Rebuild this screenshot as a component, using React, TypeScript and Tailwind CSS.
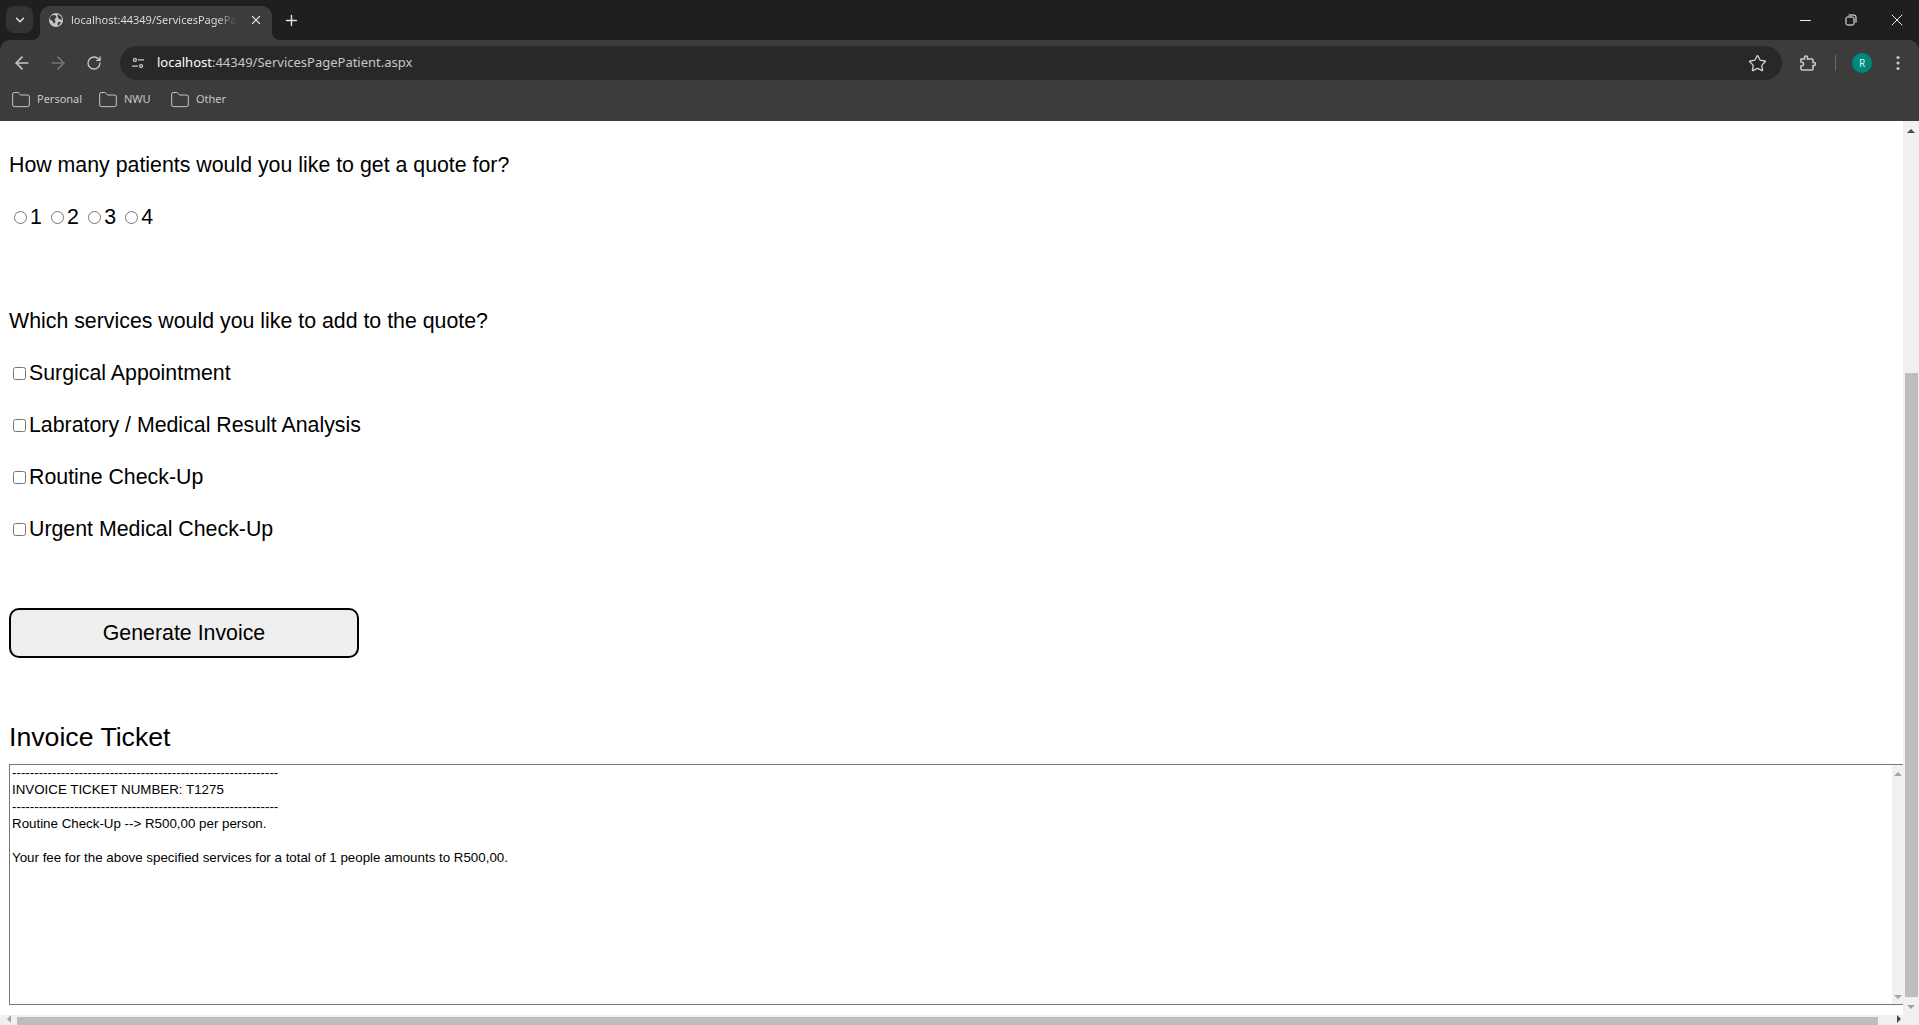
import React from 'react';
import { ArrowLeft, ArrowRight, ChevronDown, Folder, Minus, Plus, RotateCw, Star, X } from 'lucide-react';

const services = ['Surgical Appointment', 'Labratory / Medical Result Analysis', 'Routine Check-Up', 'Urgent Medical Check-Up'];
const bookmarks = [
  { name: 'Personal', width: 'w-[87px]' },
  { name: 'NWU', width: 'w-[72px]' },
  { name: 'Other', width: 'w-[70px]' },
];

function Arrow({ dir, color }: { dir: 'up' | 'down' | 'left' | 'right'; color: string }) {
  const points = {
    up: '0,8 4,4 8,8',
    down: '0,4 8,4 4,8',
    left: '6,0 6,8 2,4',
    right: '2,0 2,8 6,4',
  };
  return (
    <svg width="8" height="10" viewBox="0 0 8 10" fill={color}>
      <polygon points={points[dir]} />
    </svg>
  );
}

function TabStrip() {
  return (
    <div className="flex h-10 items-start bg-[#1f1f1f] pl-[6px]">
      <div className="mt-[6px] flex h-[27px] w-[27px] items-center justify-center rounded-lg bg-[#333333] text-[#e3e3e3]">
        <ChevronDown size={14} strokeWidth={2.5} />
      </div>
      <div className="relative z-10 ml-[7px] mt-[6px] flex h-[34px] w-[232px] items-center rounded-t-[10px] bg-[#3c3c3c] pb-[6px] pl-[8px]">
        <div className="absolute bottom-0 right-full h-2 w-2 bg-[radial-gradient(circle_at_0%_0%,transparent_8px,#3c3c3c_8px)]" />
        <div className="absolute bottom-0 left-full h-2 w-2 bg-[radial-gradient(circle_at_100%_0%,transparent_8px,#3c3c3c_8px)]" />
        <svg width="16" height="16" viewBox="0 0 16 16" className="shrink-0">
          <circle cx="8" cy="8" r="7" fill="#c4c7c5" />
          <path d="M3 3.5 L7 3 L8.5 5 L6.5 7.5 L7.5 9.5 L6 12 L4.5 9 L1.5 7 Z M10 2 L13.5 5 L13.8 8 L11 7 L9.5 4.5 Z M10 10 L13 10 L11 13.5 L9.5 13 Z" fill="#3c3c3c" />
        </svg>
        <span className="ml-[7px] w-[166px] whitespace-nowrap bg-gradient-to-r from-[#e3e3e3] from-88% to-transparent bg-clip-text font-['Noto_Sans',sans-serif] text-[11px] text-transparent">
          localhost:44349/ServicesPagePa
        </span>
        <X size={14} strokeWidth={2} className="ml-[12px] shrink-0 text-[#e3e3e3]" />
      </div>
      <Plus size={17} strokeWidth={2} className="ml-[11px] mt-[12px] text-[#e3e3e3]" />
      <div className="flex-1" />
      <div className="flex h-8 items-center text-white">
        <div className="flex w-[46px] justify-center pl-[2px] pt-[8px]"><Minus size={17} strokeWidth={1.3} /></div>
        <div className="flex w-[46px] justify-center pl-[2px] pt-[8px]">
          <svg width="12" height="12" viewBox="0 0 12 12" fill="none" stroke="currentColor" strokeWidth="1">
            <rect x="1" y="3" width="8" height="8" rx="1.5" />
            <path d="M3.5 1h5.5a2 2 0 0 1 2 2v5.5" />
          </svg>
        </div>
        <div className="flex w-[46px] justify-center pl-[2px] pt-[8px]"><X size={20} strokeWidth={1.1} /></div>
      </div>
    </div>
  );
}

function Toolbar() {
  return (
    <div className="bg-[#1f1f1f]">
      <div className="flex h-10 items-center rounded-t-[10px] bg-[#3c3c3c] pl-3 pr-[19px] pt-[6px] text-[#c7c7c7]">
        <ArrowLeft size={20} strokeWidth={2} className="text-[#c7c7c7]" />
        <ArrowRight size={20} strokeWidth={2} className="ml-4 text-[#757575]" />
        <RotateCw size={16} strokeWidth={2} className="ml-[18px]" />
        <div className="ml-[18px] flex h-[34px] flex-1 items-center rounded-full bg-[#282828] pl-[11px] pr-[15px]">
          <svg width="14" height="14" viewBox="0 0 16 16" fill="none" stroke="#c7c7c7" strokeWidth="1.5">
            <circle cx="4.5" cy="4.5" r="1.7" />
            <path d="M8 4.5h7M1 11.5h7" />
            <circle cx="11.5" cy="11.5" r="1.7" />
          </svg>
          <span className="ml-3 font-['Noto_Sans',sans-serif] text-[13px] text-[#c7c7c7]">
            <span className="text-white">localhost</span>:44349/ServicesPagePatient.aspx
          </span>
          <div className="flex-1" />
          <Star size={19} strokeWidth={1.7} className="text-[#d0d0d0]" />
        </div>
        <svg width="18" height="18" viewBox="0 0 18 18" fill="none" stroke="#c7c7c7" strokeWidth="1.6" className="ml-[17px]">
          <path d="M2 5h3.5V3.5a1.5 1.5 0 0 1 3 0V5H13a1 1 0 0 1 1 1v2.5h1a1.5 1.5 0 0 1 0 3h-1V15a1 1 0 0 1-1 1H3a1 1 0 0 1-1-1v-3c2 .2 2.5-1 2.5-2s-.7-2-2.5-2Z" />
        </svg>
        <div className="ml-[18px] h-[16px] w-px bg-[#6a6a6a]" />
        <div className="ml-4 flex h-5 w-5 items-center justify-center rounded-full bg-[#00897b] font-['Noto_Sans',sans-serif] text-[10px] text-[#d8f5f0]">R</div>
        <svg width="4" height="16" viewBox="0 0 4 16" fill="#c7c7c7" className="ml-6">
          <circle cx="2" cy="2.5" r="1.6" />
          <circle cx="2" cy="8" r="1.6" />
          <circle cx="2" cy="13.5" r="1.6" />
        </svg>
      </div>
    </div>
  );
}

function BookmarksBar() {
  return (
    <div className="flex h-[41px] items-center bg-[#3c3c3c] pb-[2px] pl-[11px] font-['Noto_Sans',sans-serif] text-[11px] text-[#c7c7c7]">
      {bookmarks.map((b) => (
        <div key={b.name} className={`flex items-center gap-[6px] ${b.width}`}>
          <Folder size={20} strokeWidth={1.2} />
          <span>{b.name}</span>
        </div>
      ))}
    </div>
  );
}

function PageContent() {
  return (
    <div className="min-w-0 flex-1 overflow-hidden bg-white pl-[9px] pt-8 font-['Liberation_Sans',Arial,sans-serif] text-black">
      <p className="h-6 text-[21.33px] leading-6">How many patients would you like to get a quote for?</p>
      <div className="mt-7 flex h-6 items-center text-[21.33px] leading-6">
        {[1, 2, 3, 4].map((n) => (
          <label key={n} className="mr-[4.2px] flex items-center">
            <input type="radio" name="patients" className="ml-[5px] mr-[3px] h-[13px] w-[13px]" />
            {n}
          </label>
        ))}
      </div>
      <p className="mt-20 h-6 text-[21.33px] leading-6">Which services would you like to add to the quote?</p>
      {services.map((s) => (
        <label key={s} className="mt-7 flex h-6 items-center text-[21.33px] leading-6">
          <input type="checkbox" className="ml-1 mr-[3px] h-[13px] w-[13px]" />
          {s}
        </label>
      ))}
      <button className="mt-[67px] block h-[50px] w-[350px] rounded-[10px] border-2 border-black bg-[#efefef] pt-[2px] text-[21.33px]">
        Generate Invoice
      </button>
      <h2 className="mt-[61px] h-9 text-[26.67px] leading-9">Invoice Ticket</h2>
      <div className="mt-[9px] flex h-[241px] border border-r-0 border-[#767676]">
        <div className="-mt-px flex-1 whitespace-pre-line pl-[2px] text-[13.33px] leading-[17px]">
          {`------------------------------------------------------------
INVOICE TICKET NUMBER: T1275
------------------------------------------------------------
Routine Check-Up --> R500,00 per person.

Your fee for the above specified services for a total of 1 people amounts to R500,00.`}
        </div>
        <div className="flex w-[11px] flex-col items-center justify-between bg-[#f0f0f0] py-[3px]">
          <Arrow dir="up" color="#a3a3a3" />
          <Arrow dir="down" color="#a3a3a3" />
        </div>
      </div>
    </div>
  );
}

function VerticalScrollbar() {
  return (
    <div className="flex w-4 flex-col items-center bg-[#f0f0f0]">
      <div className="flex h-[17px] items-center"><Arrow dir="up" color="#4a4a4a" /></div>
      <div className="h-[235px]" />
      <div className="h-[624px] w-[13px] bg-[#bdbdbd]" />
      <div className="flex h-[18px] items-center"><Arrow dir="down" color="#a3a3a3" /></div>
    </div>
  );
}

function HorizontalScrollbar() {
  return (
    <div className="flex h-[10px] items-end bg-[#f0f0f0]">
      <div className="flex h-[10px] w-[17px] items-center justify-center"><Arrow dir="left" color="#a3a3a3" /></div>
      <div className="h-[8px] w-[1861px] bg-[#bdbdbd]" />
      <div className="flex h-[10px] flex-1 items-center justify-center"><Arrow dir="right" color="#4a4a4a" /></div>
    </div>
  );
}

export default function App() {
  return (
    <div className="flex h-screen w-full flex-col overflow-hidden bg-white">
      <TabStrip />
      <Toolbar />
      <BookmarksBar />
      <div className="flex min-h-0 flex-1">
        <PageContent />
        <VerticalScrollbar />
      </div>
      <HorizontalScrollbar />
    </div>
  );
}
